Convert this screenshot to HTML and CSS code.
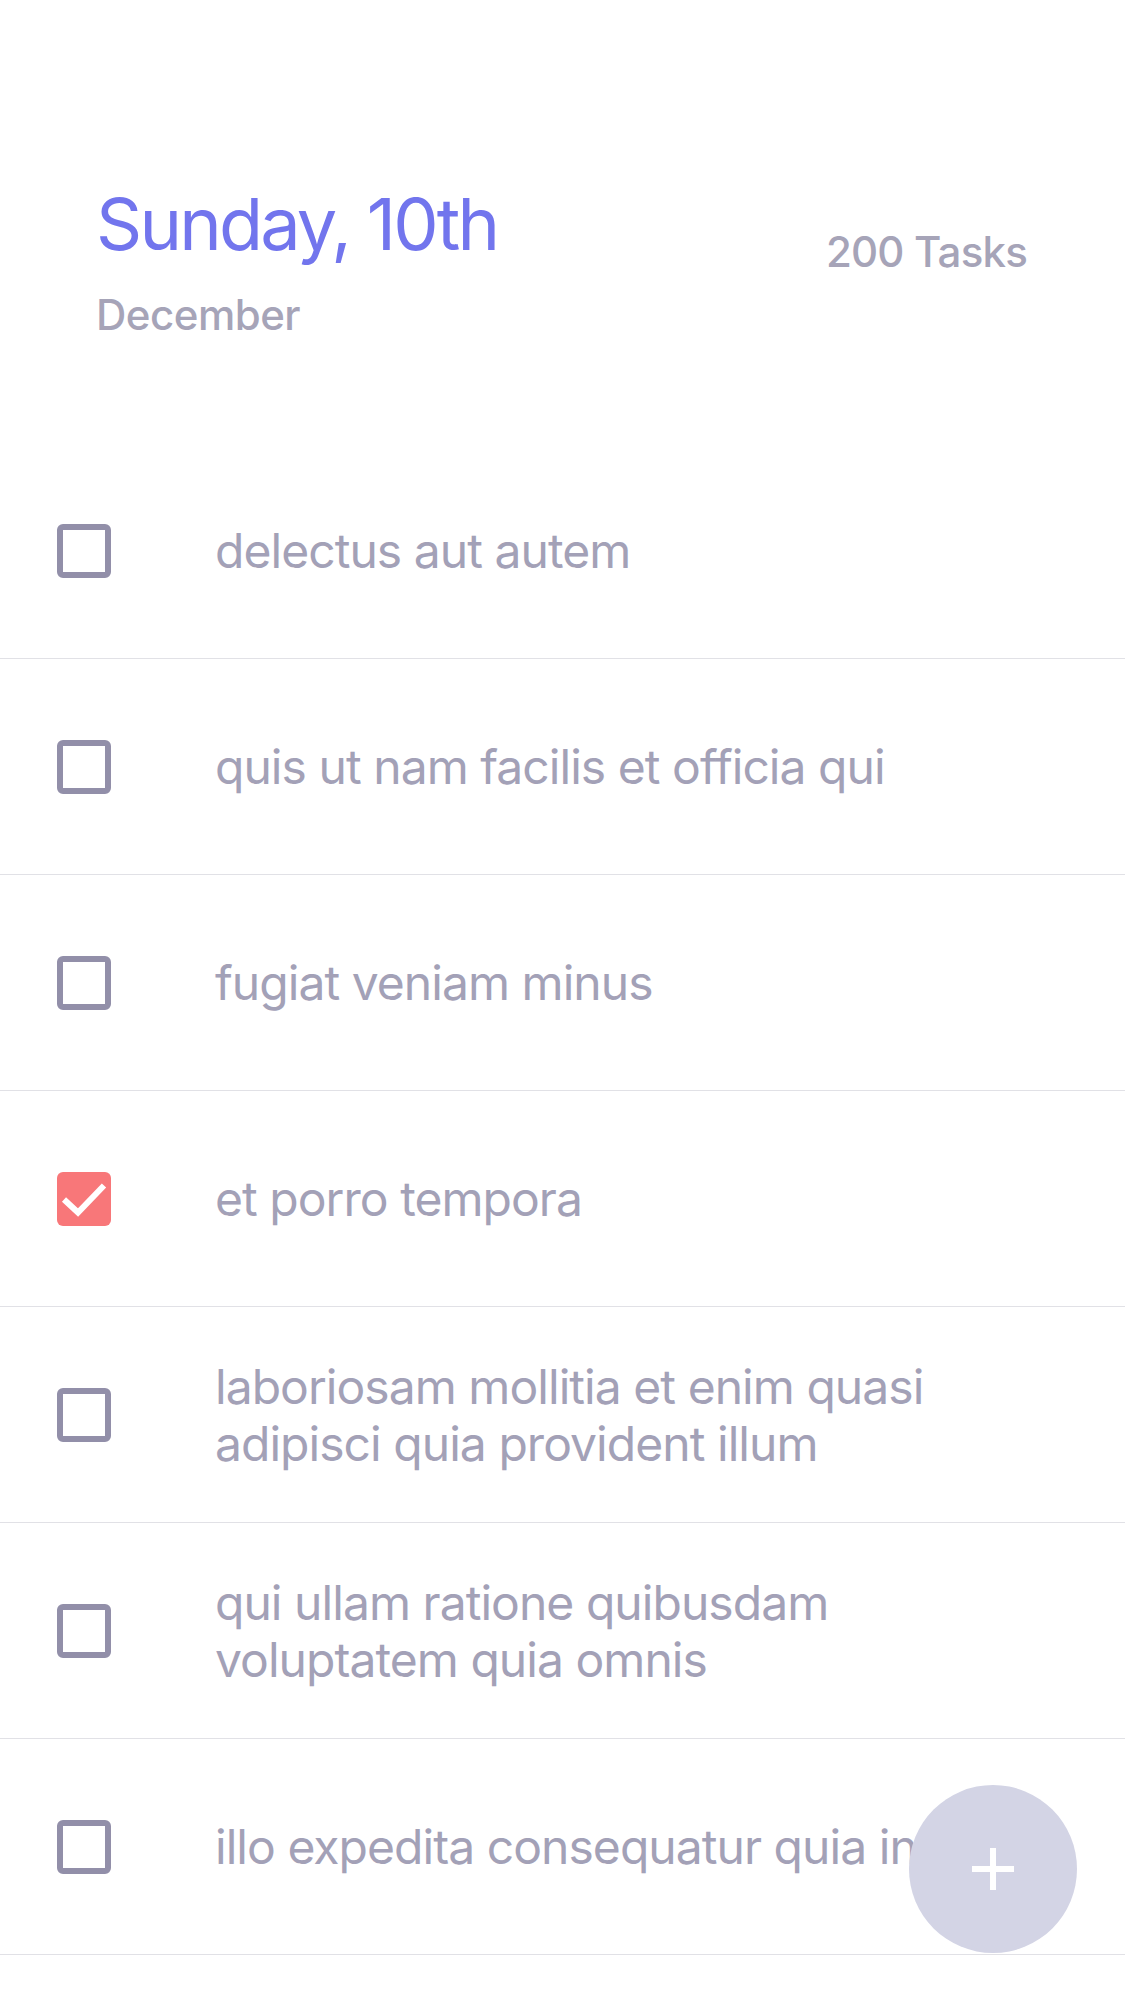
FILE: index.html
```html
<!DOCTYPE html>
<html lang="en">
<head>
<meta charset="utf-8">
<title>Tasks</title>
<link rel="stylesheet" href="styles.css">
</head>
<body>
<div class="screen">
  <header class="header">
    <div class="date">
      <h1 class="day">Sunday, 10th</h1>
      <div class="month">December</div>
    </div>
    <div class="count">200 Tasks</div>
  </header>

  <ul class="list">
    <li class="row">
      <span class="box"></span>
      <span class="text">delectus aut autem</span>
    </li>
    <li class="row">
      <span class="box"></span>
      <span class="text">quis ut nam facilis et officia qui</span>
    </li>
    <li class="row">
      <span class="box"></span>
      <span class="text">fugiat veniam minus</span>
    </li>
    <li class="row">
      <span class="box checked"><svg viewBox="0 0 54 54" width="54" height="54"><path d="M7 27.5 L21 40.5 L47 13.5" fill="none" stroke="#fff" stroke-width="6"/></svg></span>
      <span class="text">et porro tempora</span>
    </li>
    <li class="row">
      <span class="box"></span>
      <span class="text">laboriosam mollitia et enim quasi adipisci quia provident illum</span>
    </li>
    <li class="row">
      <span class="box"></span>
      <span class="text">qui ullam ratione quibusdam voluptatem quia omnis</span>
    </li>
    <li class="row">
      <span class="box"></span>
      <span class="text">illo expedita consequatur quia in</span>
    </li>
  </ul>

  <button class="fab" aria-label="Add task"><span class="plus"></span></button>
</div>
</body>
</html>
```

FILE: styles.css
```css
html, body {
  margin: 0;
  padding: 0;
  background: #ffffff;
}

body {
  font-family: Inter, "Noto Sans", "Liberation Sans", sans-serif;
  overflow: hidden;
}

.screen {
  height: 2001px;
  overflow: hidden;
  position: relative;
}

.header {
  display: flex;
  justify-content: space-between;
  align-items: flex-start;
  padding: 181px 98px 0 96px;
}

.day {
  margin: 0;
  font-size: 72px;
  line-height: 86px;
  font-weight: 400;
  color: #7275ed;
  letter-spacing: -2.8px;
}

.month {
  margin-top: 23px;
  font-size: 42px;
  line-height: 50px;
  font-weight: 500;
  color: #a6a4b8;
  letter-spacing: -0.5px;
}

.count {
  margin-top: 46px;
  font-size: 42px;
  line-height: 50px;
  font-weight: 500;
  color: #a6a4b8;
  letter-spacing: -0.8px;
}

.list {
  list-style: none;
  margin: 103px 0 0;
  padding: 0;
}

.row {
  display: flex;
  align-items: center;
  height: 215px;
  border-bottom: 1px solid #e1e1e6;
  padding: 0 110px 0 57px;
  box-sizing: content-box;
}

.box {
  flex: none;
  width: 54px;
  height: 54px;
  box-sizing: border-box;
  border: 6px solid #928fa9;
  border-radius: 6px;
  margin-right: 104px;
  display: flex;
}

.box.checked {
  border: none;
  background: #f87779;
}

.text {
  font-size: 48px;
  line-height: 57px;
  color: #a3a1b7;
  letter-spacing: -0.95px;
}

.fab {
  position: absolute;
  right: 48px;
  bottom: 48px;
  width: 168px;
  height: 168px;
  border-radius: 50%;
  border: none;
  padding: 0;
  background: #d3d4e5;
}

.plus {
  position: absolute;
  left: 63px;
  top: 63px;
  width: 42px;
  height: 42px;
}

.plus::before,
.plus::after {
  content: "";
  position: absolute;
  background: #ffffff;
}

.plus::before {
  left: 0;
  right: 0;
  top: 18px;
  height: 6px;
}

.plus::after {
  top: 0;
  bottom: 0;
  left: 18px;
  width: 6px;
}
```
